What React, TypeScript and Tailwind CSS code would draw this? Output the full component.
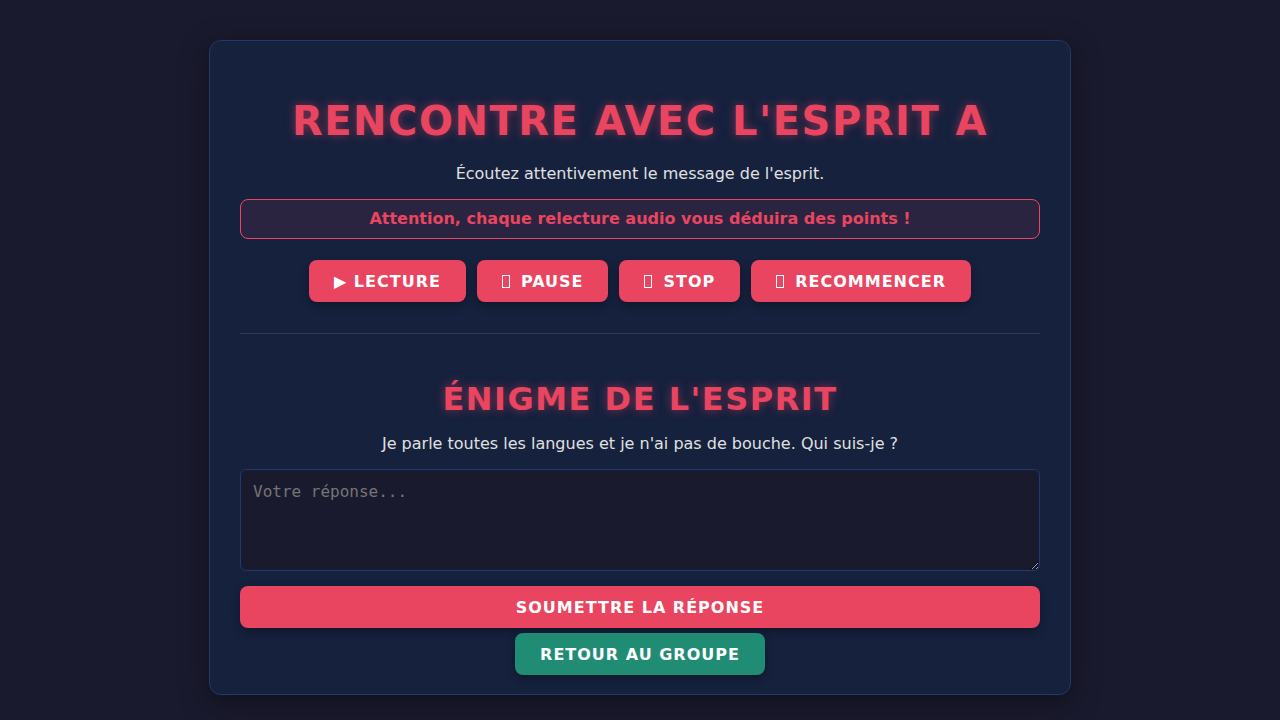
const btn =
  "h-[42px] rounded-lg bg-[#e94560] px-[25px] pt-px text-base font-bold uppercase tracking-[1px] text-white shadow-[0_4px_10px_rgba(0,0,0,0.3)]";

// the reference shows missing-glyph boxes in place of the media emoji
function Tofu() {
  return <span className="mr-[11px] inline-block h-[13px] w-[8px] border border-white align-[-1px]" />;
}

export default function App() {
  return (
    <div className="min-h-screen bg-[#1a1a2e] pt-[40px] font-['DejaVu_Sans',sans-serif] text-[#e0e0e0]">
      <div className="mx-auto flex w-[862px] flex-col rounded-xl border border-[#1f3a6b] bg-[#16213e] px-[30px] pb-[19px] pt-[30px] shadow-[0_8px_30px_rgba(0,0,0,0.4)]">
        <h1 className="mt-[26px] text-center text-[40px] font-bold leading-[48px] tracking-[1.5px] text-[#e94560] [text-shadow:0_0_10px_rgba(233,69,96,0.5)]">
          RENCONTRE AVEC L'ESPRIT A
        </h1>
        <p className="mt-[17px] text-center text-base leading-6">
          Écoutez attentivement le message de l'esprit.
        </p>
        <div className="mt-[13px] flex h-[40px] items-center justify-center rounded-lg border border-[#e94560] bg-[rgba(233,69,96,0.1)] text-base font-bold text-[#e94560]">
          Attention, chaque relecture audio vous déduira des points !
        </div>
        <div className="mt-[21px] flex justify-center gap-[11px]">
          <button className={btn}>▶ Lecture</button>
          <button className={btn}>
            <Tofu />
            Pause
          </button>
          <button className={btn}>
            <Tofu />
            Stop
          </button>
          <button className={btn}>
            <Tofu />
            Recommencer
          </button>
        </div>
        <div className="mt-[31px] h-px bg-[#2a3a5e]" />
        <h2 className="mt-[45px] text-center text-[32px] font-bold leading-[40px] tracking-[1.5px] text-[#e94560] [text-shadow:0_0_10px_rgba(233,69,96,0.5)]">
          ÉNIGME DE L'ESPRIT
        </h2>
        <p className="mt-[13px] text-center text-base leading-6">
          Je parle toutes les langues et je n'ai pas de bouche. Qui suis-je ?
        </p>
        <textarea
          placeholder="Votre réponse..."
          className="mt-[13px] h-[102px] w-full rounded-md border border-[#1f3a6b] bg-[#1a1a2e] px-3 py-[10px] font-['DejaVu_Sans_Mono',monospace] text-base text-[#e0e0e0] placeholder:text-[#757575] focus:outline-none"
        />
        <button className={`${btn} mt-[15px] w-full`}>Soumettre la réponse</button>
        <button className="mx-auto mt-[5px] h-[42px] rounded-lg bg-[#218c74] px-[25px] pt-px text-base font-bold uppercase tracking-[1px] text-white shadow-[0_4px_10px_rgba(0,0,0,0.3)]">
          Retour au groupe
        </button>
      </div>
    </div>
  );
}
